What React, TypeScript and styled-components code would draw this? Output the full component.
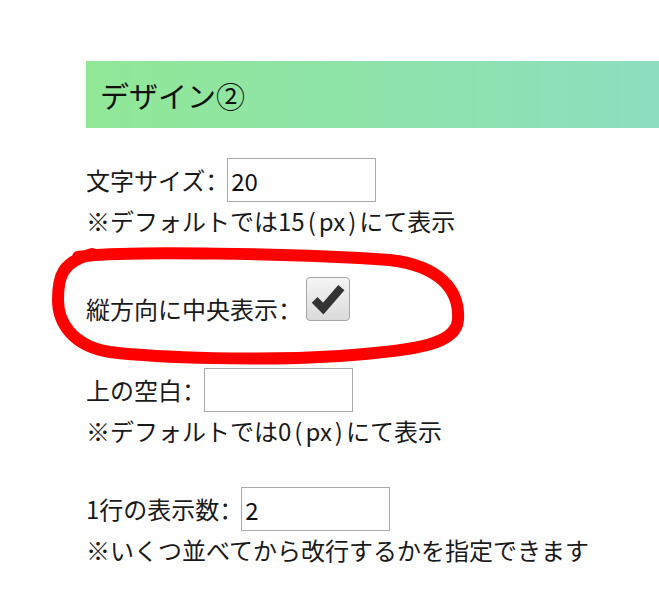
import { createGlobalStyle, styled } from "styled-components";

const GlobalStyle = createGlobalStyle`
  html, body {
    margin: 0;
    padding: 0;
    background: #ffffff;
  }
  body {
    font-family: "Noto Sans CJK JP", "Noto Sans", sans-serif;
    color: #1a1a1a;
  }
`;

const Page = styled.div`
  position: relative;
  width: 659px;
  height: 592px;
  overflow: hidden;
  padding: 61px 0 0 86px;
  box-sizing: border-box;
  font-size: 24px;
`;

const Heading = styled.h2`
  margin: 0;
  height: 67px;
  display: flex;
  align-items: center;
  padding-left: 14px;
  font-size: 29px;
  font-weight: 400;
  color: #111;
  background: linear-gradient(to right, #91e896, #8cdebf);
`;

const Section = styled.div<{ $gap: number }>`
  margin-top: ${({ $gap }) => $gap}px;
`;

const FieldRow = styled.div`
  display: flex;
  align-items: center;
  height: 44px;
`;

const CheckRow = styled.div`
  display: flex;
  align-items: flex-end;
  height: 44px;
`;

const Label = styled.span`
  line-height: 24px;
  white-space: nowrap;
`;

/* the colon sits on the left of its full-width cell, as in the source page */
const Colon = styled.span`
  font-family: "Noto Sans CJK SC", "Noto Sans CJK JP", sans-serif;
`;

const TextInput = styled.input`
  box-sizing: border-box;
  width: 149px;
  height: 44px;
  margin: 0 0 0 -2px;
  padding: 0 3px;
  border: 1px solid #a9a9a9;
  font: inherit;
  font-size: 24px;
  color: #111;
  background: #fff;
  outline: none;
`;

const CheckBox = styled.span`
  box-sizing: border-box;
  width: 44px;
  height: 44px;
  margin-left: 4px;
  border: 1px solid #a6a6a6;
  border-radius: 4px;
  background: linear-gradient(#f5f5f5, #dadada);
  display: flex;
  align-items: center;
  justify-content: center;
`;

const Note = styled.div`
  line-height: 38px;
  white-space: nowrap;
`;

const Paren = styled.span`
  padding: 0 3px;
`;

const Annotation = styled.svg`
  position: absolute;
  left: 0;
  top: 0;
  pointer-events: none;
`;

function App() {
  return (
    <>
      <GlobalStyle />
      <Page>
        <Heading>デザイン②</Heading>

        <Section $gap={30}>
          <FieldRow>
            <Label>
              文字サイズ<Colon>：</Colon>
            </Label>
            <TextInput type="text" defaultValue="20" />
          </FieldRow>
          <Note>
            ※デフォルトでは15<Paren>(</Paren>px<Paren>)</Paren>にて表示
          </Note>
        </Section>

        <Section $gap={37}>
          <CheckRow>
            <Label>
              縦方向に中央表示<Colon>：</Colon>
            </Label>
            <CheckBox>
              <svg width="44" height="44" viewBox="0 0 44 44">
                <polyline
                  points="8,23 17,32 36,10"
                  fill="none"
                  stroke="#333"
                  strokeWidth="8.5"
                  strokeLinejoin="miter"
                />
              </svg>
            </CheckBox>
          </CheckRow>
        </Section>

        <Section $gap={47}>
          <FieldRow>
            <Label>
              上の空白<Colon>：</Colon>
            </Label>
            <TextInput type="text" defaultValue="" />
          </FieldRow>
          <Note>
            ※デフォルトでは0<Paren>(</Paren>px<Paren>)</Paren>にて表示
          </Note>
        </Section>

        <Section $gap={37}>
          <FieldRow>
            <Label>
              1行の表示数<Colon>：</Colon>
            </Label>
            <TextInput type="text" defaultValue="2" />
          </FieldRow>
          <Note>※いくつ並べてから改行するかを指定できます</Note>
        </Section>

        <Annotation width="659" height="592" viewBox="0 0 659 592">
          <path
            d="M 78 257 C 120 250, 300 254, 390 260 C 440 266, 460 290, 458 320 C 456 344, 420 350, 340 356 C 260 361, 160 358, 110 352 C 72 346, 58 322, 58 300 C 58 276, 62 262, 92 254"
            fill="none"
            stroke="#ff0000"
            strokeWidth="12"
            strokeLinecap="round"
            strokeLinejoin="round"
          />
        </Annotation>
      </Page>
    </>
  );
}

export default App;
